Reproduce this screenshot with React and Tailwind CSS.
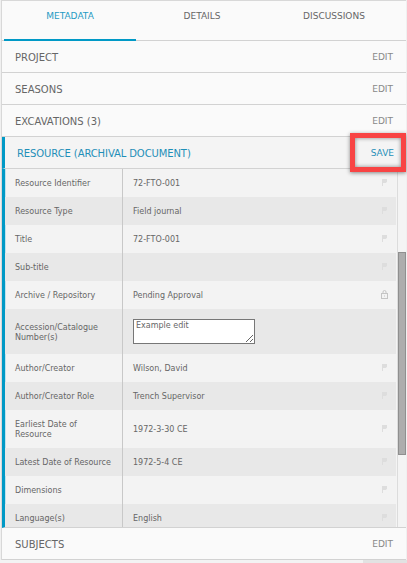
import React from 'react';

const tabs = ['METADATA', 'DETAILS', 'DISCUSSIONS'];

const rows = [
  { label: 'Resource Identifier', value: '72-FTO-001', h: 'h-[28px]' },
  { label: 'Resource Type', value: 'Field journal', h: 'h-[28px]' },
  { label: 'Title', value: '72-FTO-001', h: 'h-[28px]' },
  { label: 'Sub-title', value: '', h: 'h-[28px]' },
  { label: 'Archive / Repository', value: 'Pending Approval', h: 'h-[28px]', locked: true },
  { label: 'Accession/Catalogue Number(s)', edit: true, h: 'h-[45px]' },
  { label: 'Author/Creator', value: 'Wilson, David', h: 'h-[28px]' },
  { label: 'Author/Creator Role', value: 'Trench Supervisor', h: 'h-[28px]' },
  { label: 'Earliest Date of Resource', value: '1972-3-30 CE', h: 'h-[38px]' },
  { label: 'Latest Date of Resource', value: '1972-5-4 CE', h: 'h-[28px]' },
  { label: 'Dimensions', value: '', h: 'h-[28px]' },
  { label: 'Language(s)', value: 'English', h: 'h-[28px]' },
];

function Flag() {
  return (
    <svg width="5" height="7" viewBox="0 0 5 7" className="text-[#dddddd] shrink-0 -mt-[2px]">
      <path d="M0 0h5v3L3.5 4H1v3H0z" fill="currentColor" />
    </svg>
  );
}

function Lock() {
  return (
    <svg width="7" height="9" viewBox="0 0 7 9" fill="none" stroke="#c4c4c4" strokeWidth="1" className="shrink-0 -mr-[1px] -mt-[1px]">
      <path d="M2 4V2a1.5 1.5 0 0 1 3 0v2" />
      <rect x="0.5" y="3.5" width="6" height="5" />
      <path d="M3.5 5.5v1" />
    </svg>
  );
}

function Section({ title }) {
  return (
    <div className="h-[32px] flex items-start justify-between pl-[13px] pr-[13px] border-b border-[#d2d2d2] bg-[#fafafa]">
      <span className="mt-[11px] text-[10px] leading-[12px] text-[#666]">{title}</span>
      <span className="mt-[10px] text-[9px] leading-[12px] text-[#888]">EDIT</span>
    </div>
  );
}

export default function App() {
  return (
    <div className="relative w-[407px] h-[563px] overflow-hidden bg-[#f0f0f0] font-['DejaVu_Sans',sans-serif]">
      <div className="ml-[1px] w-[405px] border-l border-t border-[#d8d8d8] bg-[#fafafa]">
        {/* Tabs */}
        <div className="flex h-[40px] border-b border-[#d2d2d2] pl-[2px]">
          {tabs.map((tab, i) => (
            <div
              key={tab}
              className={`w-[132px] h-[40px] pt-[9px] text-center text-[9px] leading-[12px] ${i === 0 ? 'text-[#1f9bc4] border-b-2 border-[#0099c6]' : 'text-[#666]'}`}
            >
              {tab}
            </div>
          ))}
        </div>

        <Section title="PROJECT" />
        <Section title="SEASONS" />
        <Section title="EXCAVATIONS (3)" />

        {/* Open section */}
        <div className="h-[32px] flex items-start justify-between pl-[12px] pr-[12px] border-b border-[#d2d2d2] border-l-[3px] border-l-[#0099c6] bg-[#f4f4f4]">
          <span className="mt-[11px] text-[10px] leading-[12px] tracking-[-0.1px] text-[#1f8fb8]">RESOURCE (ARCHIVAL DOCUMENT)</span>
          <span className="mt-[10px] text-[9px] leading-[12px] text-[#1f8fb8]">SAVE</span>
        </div>

        <div className="flex h-[359px] overflow-hidden border-b border-[#d2d2d2] border-l-[3px] border-l-[#0099c6] bg-[#f4f4f4]">
          <div className="w-[391px] shrink-0">
            {rows.map((row, i) => (
              <div key={row.label} className={`flex border-l ${row.h} ${i % 2 ? 'bg-[#e8e8e8] border-l-[#e8e8e8]' : 'bg-[#f3f3f3] border-l-[#bfe3ee]'}`}>
                <div className="w-[117px] shrink-0 border-r border-[#c8c8c8] flex items-center pl-[9px] pr-[10px] text-[8px] leading-[10px] text-[#666]">
                  <span className="mt-[2px]">{row.label}</span>
                </div>
                <div className="flex-1 flex items-center pl-[10px] pr-[9px] justify-between text-[8px] leading-[10px] text-[#666]">
                  {row.edit ? (
                    <textarea
                      readOnly
                      defaultValue="Example edit"
                      className="w-[122px] h-[25px] bg-white border border-[#777] px-[2px] pt-[1px] pb-0 text-[8px] leading-[10px] text-[#666]"
                    />
                  ) : (
                    <span className="mt-[2px]">{row.value}</span>
                  )}
                  {row.edit ? null : row.locked ? <Lock /> : <Flag />}
                </div>
              </div>
            ))}
          </div>
          {/* Scrollbar */}
          <div className="ml-[1px] w-[10px] border-l border-[#dcdcdc] bg-[#f4f4f4]">
            <div className="mt-[83px] h-[203px] bg-[#adadad] border border-[#8f8f8f]" />
          </div>
        </div>

        <Section title="SUBJECTS" />
      </div>

      {/* Page scrollbar strip */}
      <div className="flex h-[3px]">
        <div className="w-[363px] bg-[#f3f3f3]" />
        <div className="flex-1 bg-[#e2e2e2]" />
      </div>

      {/* Highlight annotation */}
      <div className="absolute left-[350px] top-[133px] w-[56px] h-[39px] border-[5px] border-[#f84444] shadow-[0_1px_4px_rgba(0,0,0,0.45),inset_0_0_4px_rgba(0,0,0,0.45)]" />
    </div>
  );
}
